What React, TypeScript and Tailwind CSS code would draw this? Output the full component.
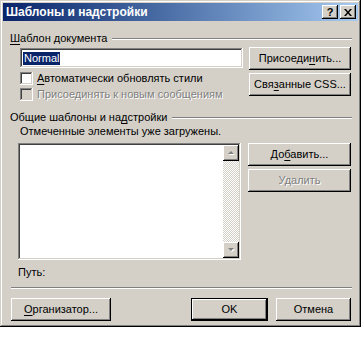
import React from 'react';

const raised =
  'shadow-[inset_-1px_-1px_#000000,inset_1px_1px_#ffffff,inset_-2px_-2px_#808080,inset_2px_2px_#d4d0c8]';
const sunken =
  'shadow-[inset_-1px_-1px_#ffffff,inset_1px_1px_#808080,inset_-2px_-2px_#d4d0c8,inset_2px_2px_#404040]';
const disabledText = 'text-[#808080] [text-shadow:1px_1px_0_#ffffff]';

function Btn({
  children,
  disabled,
  isDefault,
  className = '',
}: {
  children: React.ReactNode;
  disabled?: boolean;
  isDefault?: boolean;
  className?: string;
}) {
  return (
    <div className={`bg-[#d4d0c8] ${isDefault ? 'border border-black' : ''} ${className}`}>
      <div
        className={`w-full h-full flex items-center justify-center ${raised} ${disabled ? disabledText : 'text-black'}`}
      >
        {children}
      </div>
    </div>
  );
}

function U({ children }: { children: React.ReactNode }) {
  return <span className="underline underline-offset-[2px]">{children}</span>;
}

function GroupTitle({ children }: { children: React.ReactNode }) {
  return (
    <div className="flex items-center h-[13px]">
      <span className="leading-[13px]">{children}</span>
      <div className="flex-1 ml-[5px] h-[2px] border-t border-t-[#808080] border-b border-b-white" />
    </div>
  );
}

function Checkbox({ disabled }: { disabled?: boolean }) {
  return (
    <div className={`w-[13px] h-[13px] shrink-0 ${disabled ? 'bg-[#d4d0c8]' : 'bg-white'} ${sunken}`} />
  );
}

function Arrow({ up }: { up?: boolean }) {
  return (
    <div className={`w-4 h-4 bg-[#d4d0c8] flex items-center justify-center ${raised}`}>
      <svg width="9" height="6" viewBox="0 0 9 6">
        {up ? (
          <>
            <path d="M2 5 L5 2 L8 5 Z" fill="#ffffff" />
            <path d="M1 4 L4 1 L7 4 Z" fill="#808080" />
          </>
        ) : (
          <>
            <path d="M2 2 L8 2 L5 5 Z" fill="#ffffff" />
            <path d="M1 1 L7 1 L4 4 Z" fill="#808080" />
          </>
        )}
      </svg>
    </div>
  );
}

export default function App() {
  return (
    <div className="w-[364px] h-[337px] bg-white font-['Liberation_Sans',Arial,sans-serif] text-[11px] text-black">
      <div
        className={`w-[361px] h-[327px] bg-[#d4d0c8] p-[3px] flex flex-col shadow-[inset_-1px_-1px_#000000,inset_1px_1px_#d4d0c8,inset_-2px_-2px_#808080,inset_2px_2px_#ffffff]`}
      >
        {/* title bar */}
        <div className="h-[18px] flex items-center pl-[3px] pr-[2px] bg-linear-to-r from-[#0a246a] to-[#a6caf0]">
          <span className="flex-1 text-white font-bold text-[12px] leading-[18px]">Шаблоны и надстройки</span>
          <div className={`w-4 h-[14px] bg-[#d4d0c8] flex items-center justify-center font-bold text-[11px] leading-none ${raised}`}>
            ?
          </div>
          <div className={`w-4 h-[14px] ml-[2px] bg-[#d4d0c8] flex items-center justify-center ${raised}`}>
            <svg width="8" height="7" viewBox="0 0 8 7">
              <path d="M0 0h2l2 2.5L6 0h2L5 3.5 8 7H6L4 4.5 2 7H0l3-3.5z" fill="#000" />
            </svg>
          </div>
        </div>

        {/* body */}
        <div className="flex-1 flex flex-col pl-[7px] pr-[6px]">
          <div className="mt-[11px]">
            <GroupTitle>
              <U>Ш</U>аблон документа
            </GroupTitle>
          </div>

          <div className="flex mt-[2px]">
            <div className="w-[223px] ml-[10px] flex flex-col">
              <div className={`h-[20px] mt-[1px] bg-white flex items-center pl-[3px] ${sunken}`}>
                <span className="bg-[#0a246a] text-white leading-[13px] px-[1px]">Normal</span>
              </div>
              <div className="flex items-center mt-[3px] h-[14px]">
                <Checkbox />
                <span className="ml-[4px]">
                  <U>А</U>втоматически обновлять стили
                </span>
              </div>
              <div className="flex items-center mt-[2px] h-[14px]">
                <Checkbox disabled />
                <span className={`ml-[4px] ${disabledText}`}>Присоединять к новым сообщениям</span>
              </div>
            </div>
            <div className="ml-[6px] flex flex-col">
              <Btn className="w-[102px] h-[23px]">
                <span>
                  Присоеди<U>н</U>ить...
                </span>
              </Btn>
              <Btn className="w-[102px] h-[23px] mt-[3px]">
                <span>
                  Свя<U>з</U>анные CSS...
                </span>
              </Btn>
            </div>
          </div>

          <div className="mt-[10px]">
            <GroupTitle>
              Общие шаблоны и на<U>д</U>стройки
            </GroupTitle>
          </div>
          <div className="ml-[10px] mt-[1px] leading-[13px]">Отмеченные элементы уже загружены.</div>

          <div className="flex mt-[5px]">
            <div className={`w-[223px] h-[117px] ml-[8px] bg-white p-[2px] flex justify-end ${sunken}`}>
              <div className="w-4 h-full flex flex-col bg-[repeating-conic-gradient(#d4d0c8_0_25%,#ffffff_0_50%)] bg-size-[2px_2px]">
                <Arrow up />
                <div className="flex-1" />
                <Arrow />
              </div>
            </div>
            <div className="ml-[7px] flex flex-col">
              <Btn className="w-[103px] h-[23px]">
                <span>
                  До<U>б</U>авить...
                </span>
              </Btn>
              <Btn disabled className="w-[103px] h-[23px] mt-[3px]">
                Удалить
              </Btn>
            </div>
          </div>

          <div className="ml-[8px] mt-[6px] leading-[13px]">Путь:</div>

          <div className="mt-[8px] ml-[1px] h-[2px] border-t border-t-[#808080] border-b border-b-white" />

          <div className="flex mt-[9px]">
            <Btn className="w-[100px] h-[23px] ml-[1px]">
              <span>
                <U>О</U>рганизатор...
              </span>
            </Btn>
            <Btn isDefault className="w-[77px] h-[23px] ml-[80px]">
              OK
            </Btn>
            <Btn className="w-[75px] h-[23px] ml-[8px]">Отмена</Btn>
          </div>
        </div>
      </div>
    </div>
  );
}
